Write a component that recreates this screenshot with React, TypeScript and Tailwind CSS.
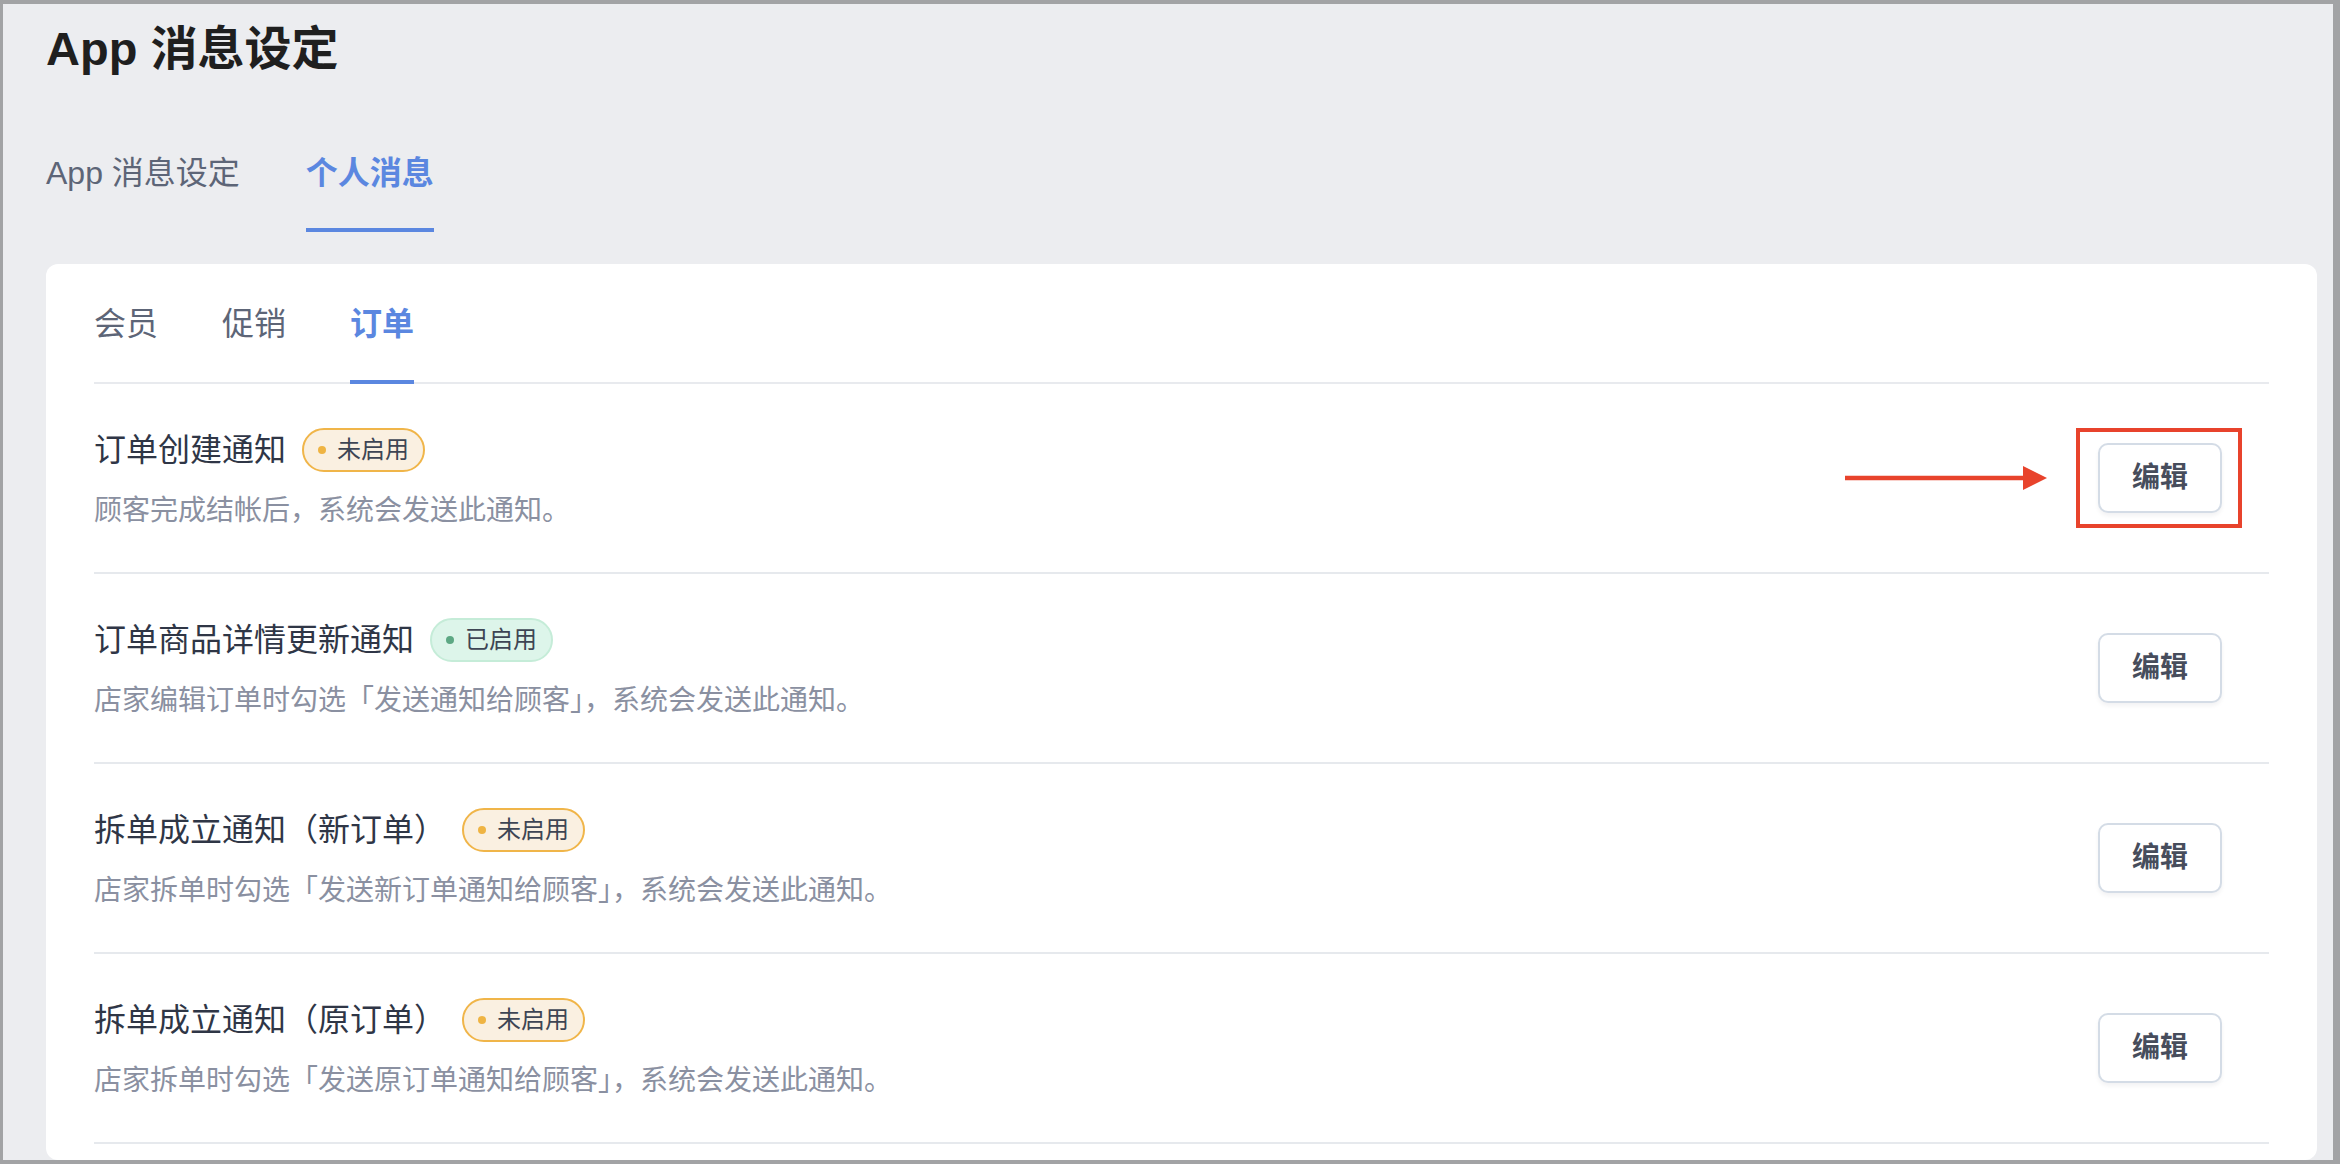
import React from 'react';

type Status = 'off' | 'on';

interface NoticeRow {
  title: string;
  desc: string;
  status: Status;
  highlight?: boolean;
}

const rows: NoticeRow[] = [
  { title: '订单创建通知', desc: '顾客完成结帐后，系统会发送此通知。', status: 'off', highlight: true },
  { title: '订单商品详情更新通知', desc: '店家编辑订单时勾选「发送通知给顾客」，系统会发送此通知。', status: 'on' },
  { title: '拆单成立通知（新订单）', desc: '店家拆单时勾选「发送新订单通知给顾客」，系统会发送此通知。', status: 'off' },
  { title: '拆单成立通知（原订单）', desc: '店家拆单时勾选「发送原订单通知给顾客」，系统会发送此通知。', status: 'off' },
];

function StatusBadge({ status }: { status: Status }) {
  if (status === 'on') {
    return (
      <span className="inline-flex h-[44px] items-center gap-[11px] rounded-full border-2 border-[#c5ecd8] bg-[#ddf5ea] px-[14px] text-[24px] leading-none text-[#3e4554]">
        <span className="h-[8px] w-[8px] rounded-full bg-[#5da884]" />
        已启用
      </span>
    );
  }
  return (
    <span className="inline-flex h-[44px] items-center gap-[11px] rounded-full border-2 border-[#f0b549] bg-[#faf0e1] px-[14px] text-[24px] leading-none text-[#3e4554]">
      <span className="h-[8px] w-[8px] rounded-full bg-[#efb443]" />
      未启用
    </span>
  );
}

function EditButton() {
  return (
    <button className="h-[70px] w-[124px] rounded-[10px] border-2 border-[#d4dce6] bg-white text-[28px] font-bold text-[#474d5c] shadow-[0_3px_4px_rgba(15,23,42,0.05)]">
      编辑
    </button>
  );
}

function Arrow() {
  return (
    <svg width="202" height="24" viewBox="0 0 202 24">
      <line x1="0" y1="12" x2="180" y2="12" stroke="#e8432c" strokeWidth="4.5" />
      <polygon points="178,0 202,12 178,24" fill="#e8432c" />
    </svg>
  );
}

function Tab({ label, active }: { label: string; active?: boolean }) {
  return (
    <div className="inline-flex flex-col">
      <span
        className={
          active
            ? 'text-[32px] font-bold leading-[44px] text-[#5b87e0]'
            : 'text-[32px] leading-[44px] text-[#5d6577]'
        }
      >
        {label}
      </span>
      <span className={`mt-[33px] h-[4px] w-full ${active ? 'bg-[#5b87e0]' : 'bg-transparent'}`} />
    </div>
  );
}

export default function App() {
  return (
    <div className="h-[1164px] w-[2340px] overflow-hidden bg-[#a2a3a5] pb-[4px] pl-[3px] pr-[7px] pt-[4px] font-['Liberation_Sans','Noto_Sans_CJK_SC',sans-serif]">
      <div className="flex h-full flex-col bg-[#ecedf0] pl-[43px] pr-[16px]">
        <h1 className="pt-[17px] text-[47px] font-bold leading-[56px] text-[#1f1f1f]">App 消息设定</h1>

        <div className="mt-[74px] flex gap-[66px]">
          <Tab label="App 消息设定" />
          <Tab label="个人消息" active />
        </div>

        <div className="mt-[32px] flex-1 rounded-[12px] bg-white px-[48px]">
          <div className="flex gap-[64px] border-b-2 border-[#e8eaee]">
            {['会员', '促销', '订单'].map((t) => (
              <div key={t} className="inline-flex flex-col pt-[38px]">
                <span
                  className={
                    t === '订单'
                      ? 'text-[32px] font-bold leading-[44px] text-[#5b87e0]'
                      : 'text-[32px] leading-[44px] text-[#5d6577]'
                  }
                >
                  {t}
                </span>
                <span
                  className={`-mb-[2px] mt-[34px] h-[4px] w-full ${t === '订单' ? 'bg-[#5b87e0]' : 'bg-transparent'}`}
                />
              </div>
            ))}
          </div>

          {rows.map((row) => (
            <div
              key={row.title}
              className="flex h-[190px] items-center justify-between border-b-2 border-[#e6e9ed]"
            >
              <div className="flex flex-col">
                <div className="flex h-[48px] items-center gap-[16px]">
                  <span className="text-[32px] leading-[48px] text-[#2f3646]">{row.title}</span>
                  <StatusBadge status={row.status} />
                </div>
                <p className="mt-[17px] text-[28px] leading-[40px] text-[#8a90a1]">{row.desc}</p>
              </div>

              {row.highlight ? (
                <div className="flex items-center pr-[27px]">
                  <Arrow />
                  <div className="ml-[29px] border-4 border-[#e8432c] pb-[11px] pl-[18px] pr-[16px] pt-[11px]">
                    <EditButton />
                  </div>
                </div>
              ) : (
                <div className="pr-[47px]">
                  <EditButton />
                </div>
              )}
            </div>
          ))}
        </div>
      </div>
    </div>
  );
}
